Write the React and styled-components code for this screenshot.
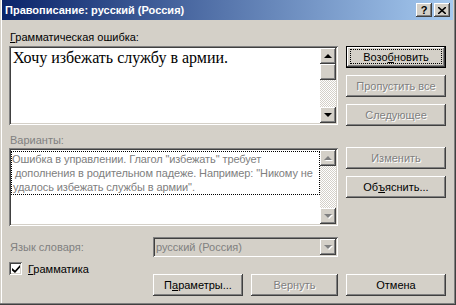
import React from "react";
import styled, { createGlobalStyle, css } from "styled-components";

const GlobalStyle = createGlobalStyle`
  html, body {
    margin: 0;
    padding: 0;
    background: #d4d0c8;
  }
  body {
    font-family: "Liberation Sans", Arial, sans-serif;
    font-size: 11px;
    color: #000;
  }
`;

const raised = css`
  box-shadow: inset -1px -1px #404040, inset 1px 1px #fff,
    inset -2px -2px #808080, inset 2px 2px #d4d0c8;
`;

const sunken = css`
  box-shadow: inset 1px 1px #808080, inset -1px -1px #fff,
    inset 2px 2px #404040, inset -2px -2px #d4d0c8;
`;

const disabledText = css`
  color: #808080;
  text-shadow: 1px 1px 0 #fff;
`;

const Window = styled.div`
  width: 456px;
  height: 305px;
  box-sizing: border-box;
  padding: 0 3px 3px 2px;
  background: #d4d0c8;
  box-shadow: inset -1px -1px #404040, inset -2px -2px #808080,
    inset 1px 0 #d4d0c8, inset 2px 0 #fff;
  display: flex;
  flex-direction: column;
`;

const TitleBar = styled.div`
  height: 20px;
  display: flex;
  align-items: center;
  padding: 0 3px 0 3px;
  background: linear-gradient(to right, #0a246a, #a6caf0);
  color: #fff;
  font-weight: bold;
  font-size: 11px;
`;

const Title = styled.div`
  flex: 1;
  white-space: nowrap;
`;

const TitleButton = styled.div`
  width: 16px;
  height: 14px;
  box-sizing: border-box;
  background: #d4d0c8;
  ${raised};
  color: #000;
  display: flex;
  align-items: center;
  justify-content: center;
  font-weight: bold;
  font-size: 11px;
  margin-left: ${(p) => (p.$gap ? "2px" : "0")};
`;

const Body = styled.div`
  padding: 11px 0 0 7px;
  display: flex;
  flex-direction: column;
`;

const TopArea = styled.div`
  display: flex;
  gap: 8px;
`;

const LeftCol = styled.div`
  width: 329px;
  display: flex;
  flex-direction: column;
`;

const RightCol = styled.div`
  width: 100px;
  display: flex;
  flex-direction: column;
  padding-top: 15px;
`;

const Label = styled.div`
  line-height: 13px;
  height: 13px;
  padding-left: 1px;
  white-space: nowrap;
  margin-top: ${(p) => p.$top || 0}px;
  ${(p) => p.$disabled && "color: #808080;"}
`;

const Key = styled.span`
  text-decoration: underline;
`;

const Box = styled.div`
  height: ${(p) => p.$h}px;
  margin-top: ${(p) => p.$top || 0}px;
  box-sizing: border-box;
  background: #fff;
  ${sunken};
  padding: 2px;
  display: flex;
`;

const BoxContent = styled.div`
  flex: 1;
  min-width: 0;
`;

const SentenceText = styled.div`
  font-family: "Liberation Serif", "Times New Roman", serif;
  font-size: 16px;
  line-height: 18px;
  padding: 1px 0 0 2px;
  white-space: nowrap;
`;

const Suggestion = styled.div`
  margin-top: 1px;
  border: 1px dotted #000;
  color: #808080;
  line-height: 14px;
  letter-spacing: -0.1px;
`;

const SuggestionLine = styled.div`
  white-space: nowrap;
  padding-left: ${(p) => p.$indent || 0}px;
`;

const Scrollbar = styled.div`
  width: 16px;
  display: flex;
  flex-direction: column;
  background: repeating-conic-gradient(#fff 0 25%, #d4d0c8 0 50%) 0 0 / 2px 2px;
`;

const Track = styled.div`
  flex: 1;
`;

const ScrollBtn = styled.div`
  width: 16px;
  height: 16px;
  box-sizing: border-box;
  background: #d4d0c8;
  ${raised};
  display: flex;
  align-items: center;
  justify-content: center;
`;

const Arrow = styled.div`
  width: 0;
  height: 0;
  border-left: 4px solid transparent;
  border-right: 4px solid transparent;
  ${(p) =>
    p.$up
      ? `border-bottom: 4px solid ${p.$disabled ? "#808080" : "#000"};`
      : `border-top: 4px solid ${p.$disabled ? "#808080" : "#000"};`}
  ${(p) => p.$disabled && "filter: drop-shadow(1px 1px 0 #fff);"}
`;

const Button = styled.div`
  height: 22px;
  box-sizing: border-box;
  background: #d4d0c8;
  ${raised};
  display: flex;
  align-items: center;
  justify-content: center;
  white-space: nowrap;
  margin-top: ${(p) => p.$top || 0}px;
  position: relative;
  ${(p) => p.$disabled && disabledText};
  ${(p) =>
    p.$default &&
    css`
      box-shadow: inset 0 0 0 1px #000, inset -2px -2px #404040,
        inset 2px 2px #fff, inset -3px -3px #808080;
    `}
`;

const FocusRect = styled.div`
  position: absolute;
  inset: 3px 4px 4px 4px;
  border: 1px dotted #000;
`;

const BottomArea = styled.div`
  margin-top: 11px;
  display: grid;
  grid-template-columns: 136px 90px 87px 100px;
  grid-template-rows: 20px auto;
  column-gap: 8px;
  row-gap: 5px;
  align-items: start;
`;

const LangLabel = styled.div`
  align-self: center;
  color: #808080;
  padding-left: 1px;
`;

const Combo = styled.div`
  grid-column: 2 / 4;
  height: 20px;
  box-sizing: border-box;
  ${sunken};
  background: #d4d0c8;
  padding: 2px;
  display: flex;
  align-items: stretch;
`;

const ComboText = styled.div`
  flex: 1;
  color: #808080;
  line-height: 16px;
  padding-left: 1px;
`;

const CheckRow = styled.div`
  display: flex;
  align-items: center;
  gap: 6px;
`;

const CheckBox = styled.div`
  width: 13px;
  height: 13px;
  box-sizing: border-box;
  background: #fff;
  ${sunken};
  display: flex;
  align-items: center;
  justify-content: center;
`;

const BottomButton = styled(Button)`
  margin-top: 12px;
`;

const UpArrow = ({ disabled }) => <Arrow $up $disabled={disabled} />;
const DownArrow = ({ disabled }) => <Arrow $disabled={disabled} />;

export default function App() {
  return (
    <>
      <GlobalStyle />
      <Window>
        <TitleBar>
          <Title>Правописание: русский (Россия)</Title>
          <TitleButton>?</TitleButton>
          <TitleButton $gap>
            <svg width="8" height="7" viewBox="0 0 8 7">
              <path d="M0 0 L8 7 M8 0 L0 7" stroke="#000" strokeWidth="1.6" />
            </svg>
          </TitleButton>
        </TitleBar>
        <Body>
          <TopArea>
            <LeftCol>
              <Label>
                <Key>Г</Key>рамматическая ошибка:
              </Label>
              <Box $h={79} $top={2}>
                <BoxContent>
                  <SentenceText>Хочу избежать службу в армии.</SentenceText>
                </BoxContent>
                <Scrollbar>
                  <ScrollBtn>
                    <UpArrow />
                  </ScrollBtn>
                  <ScrollBtn />
                  <Track />
                  <ScrollBtn>
                    <DownArrow />
                  </ScrollBtn>
                </Scrollbar>
              </Box>
              <Label $top={9} $disabled>
                Варианты:
              </Label>
              <Box $h={78} $top={1}>
                <BoxContent>
                  <Suggestion>
                    <SuggestionLine>
                      Ошибка в управлении. Глагол "избежать" требует
                    </SuggestionLine>
                    <SuggestionLine $indent={3}>
                      дополнения в родительном падеже. Например: "Никому не
                    </SuggestionLine>
                    <SuggestionLine $indent={1}>
                      удалось избежать службы в армии".
                    </SuggestionLine>
                  </Suggestion>
                </BoxContent>
                <Scrollbar>
                  <ScrollBtn>
                    <UpArrow disabled />
                  </ScrollBtn>
                  <Track />
                  <ScrollBtn>
                    <DownArrow disabled />
                  </ScrollBtn>
                </Scrollbar>
              </Box>
            </LeftCol>
            <RightCol>
              <Button $default>
                <FocusRect />
                Возо<Key>б</Key>новить
              </Button>
              <Button $top={7} $disabled>
                Пропустить все
              </Button>
              <Button $top={7} $disabled>
                Следующее
              </Button>
              <Button $top={21} $disabled>
                Изменить
              </Button>
              <Button $top={7}>
                Об<Key>ъ</Key>яснить...
              </Button>
            </RightCol>
          </TopArea>
          <BottomArea>
            <LangLabel>Язык словаря:</LangLabel>
            <Combo>
              <ComboText>русский (Россия)</ComboText>
              <ScrollBtn>
                <DownArrow disabled />
              </ScrollBtn>
            </Combo>
            <div />
            <CheckRow>
              <CheckBox>
                <svg width="8" height="8" viewBox="0 0 8 8">
                  <path d="M0 3 L0 5.5 L3 8 L8 2.5 L8 0 L3 5.5 Z" fill="#000" />
                </svg>
              </CheckBox>
              <span>
                <Key>Г</Key>рамматика
              </span>
            </CheckRow>
            <BottomButton>
              П<Key>а</Key>раметры...
            </BottomButton>
            <BottomButton $disabled>Вернуть</BottomButton>
            <BottomButton>Отмена</BottomButton>
          </BottomArea>
        </Body>
      </Window>
    </>
  );
}
